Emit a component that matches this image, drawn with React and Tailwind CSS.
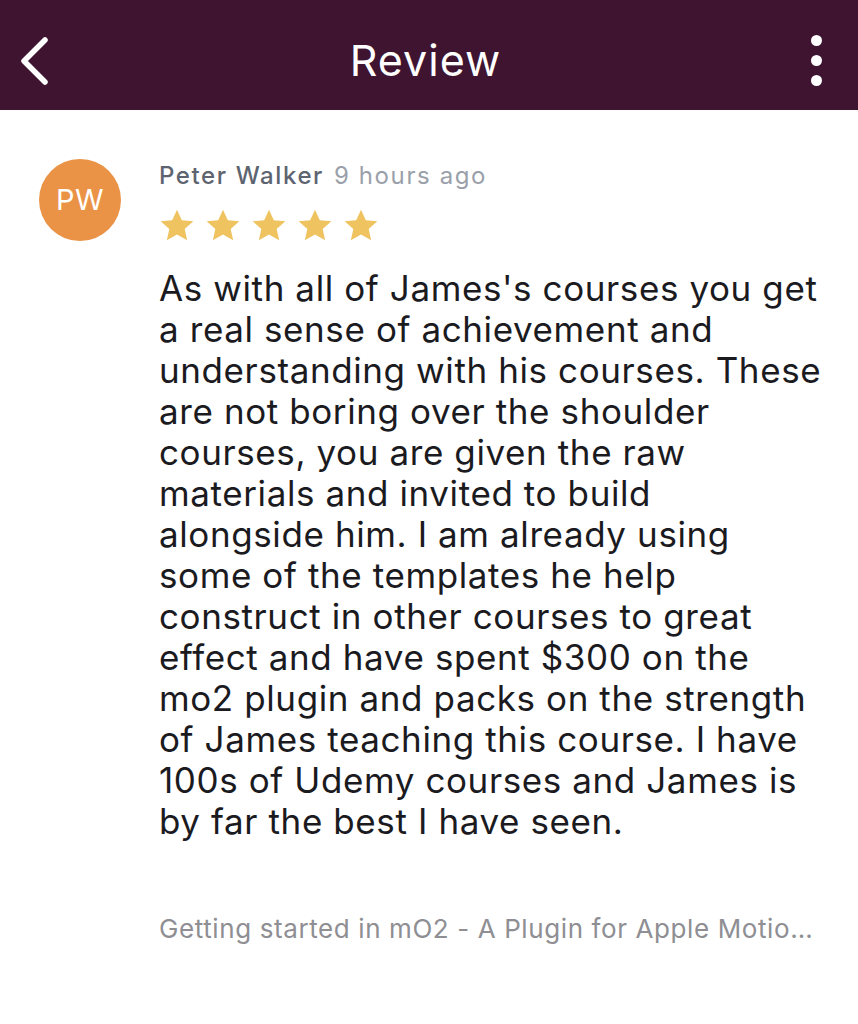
import { useState } from 'react'

// baris review dipecah sesuai tampilan aslinya
const isiReview = [
  "As with all of James's courses you get",
  'a real sense of achievement and',
  'understanding with his courses. These',
  'are not boring over the shoulder',
  'courses, you are given the raw',
  'materials and invited to build',
  'alongside him. I am already using',
  'some of the templates he help',
  'construct in other courses to great',
  'effect and have spent $300 on the',
  'mo2 plugin and packs on the strength',
  'of James teaching this course. I have',
  '100s of Udemy courses and James is',
  'by far the best I have seen.',
]

function Bintang() {
  return (
    <svg viewBox="0 0 24 24" width={40} height={40} className="shrink-0">
      <path
        fill="#eec360"
        d="M12 2.2l2.9 6.3 6.9.7-5.2 4.6 1.5 6.8L12 17.1l-6.1 3.5 1.5-6.8-5.2-4.6 6.9-.7z"
      />
    </svg>
  )
}

export default function App() {
  const [rating] = useState(5)

  return (
    <div className="w-[858px] h-[1024px] bg-white font-['Inter',sans-serif]">
      {/* header ungu */}
      <div className="h-[110px] bg-[#3e1431] flex items-center justify-between pl-[18px] pr-[25px] pt-[12px]">
        <svg width={34} height={50} viewBox="0 0 34 50" fill="none">
          <path d="M27 4 L6 25 L27 46" stroke="white" strokeWidth={5.5} strokeLinecap="round" strokeLinejoin="round" />
        </svg>
        <h1 className="text-white text-[43px] font-normal tracking-[1px] -mt-[2px]">Review</h1>
        <div className="flex flex-col gap-[9px] items-center w-[34px] -mt-[2px]">
          <span className="w-[11px] h-[11px] rounded-full bg-white" />
          <span className="w-[11px] h-[11px] rounded-full bg-white" />
          <span className="w-[11px] h-[11px] rounded-full bg-white" />
        </div>
      </div>

      {/* isi review */}
      <div className="flex gap-[38px] pl-[39px] pt-[49px]">
        <div className="w-[82px] h-[82px] rounded-full bg-[#ea9347] flex items-center justify-center shrink-0">
          <span className="text-white text-[29px] tracking-[0.5px]">PW</span>
        </div>
        <div className="flex-1 min-w-0 pr-[30px]">
          <p className="text-[24px] leading-[30px] pt-[2px] tracking-[1.6px]">
            <span className="text-[#5d6470] font-medium">Peter Walker</span>
            <span className="text-[#9aa0aa] ml-[10px]">9 hours ago</span>
          </p>
          <div className="flex gap-[6px] mt-[15px] -ml-[2px]">
            {Array.from({ length: rating }).map((_, i) => (
              <Bintang key={i} />
            ))}
          </div>
          <div className="mt-[22px] text-[#1b1b1f] text-[35px] leading-[41px] tracking-[0.6px]">
            {isiReview.map((baris, i) => (
              <p key={i} className="whitespace-nowrap">
                {baris}
              </p>
            ))}
          </div>
          <p className="mt-[70px] text-[#8e8e93] text-[26px] leading-[34px] tracking-[0.6px] whitespace-nowrap overflow-hidden text-ellipsis w-[662px]">
            Getting started in mO2 - A Plugin for Apple Motion 5
          </p>
        </div>
      </div>
    </div>
  )
}
